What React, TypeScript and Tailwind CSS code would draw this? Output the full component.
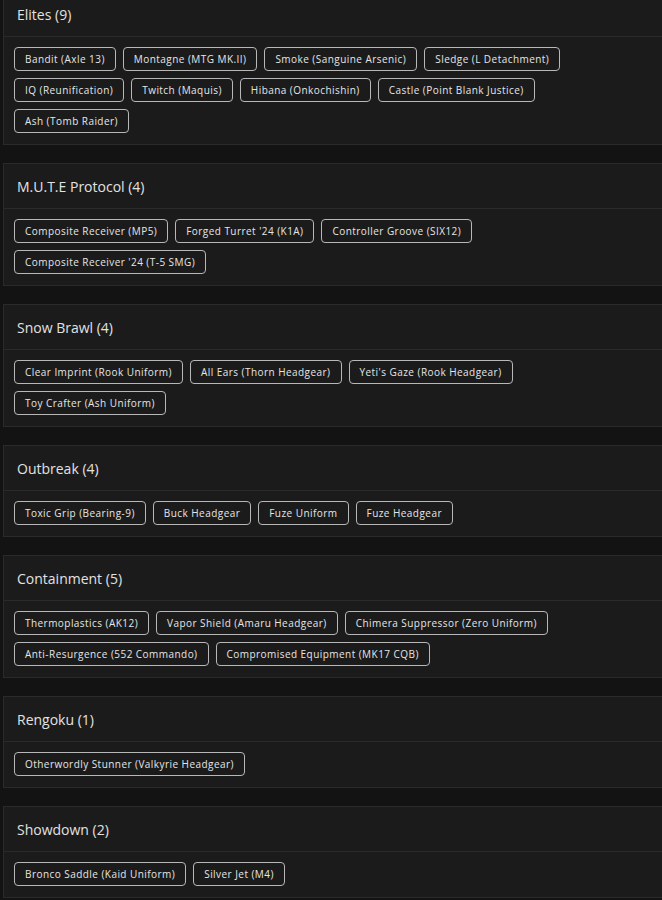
const sections: { title: string; items: string[] }[] = [
  {
    title: 'Elites (9)',
    items: [
      'Bandit (Axle 13)',
      'Montagne (MTG MK.II)',
      'Smoke (Sanguine Arsenic)',
      'Sledge (L Detachment)',
      'IQ (Reunification)',
      'Twitch (Maquis)',
      'Hibana (Onkochishin)',
      'Castle (Point Blank Justice)',
      'Ash (Tomb Raider)',
    ],
  },
  {
    title: 'M.U.T.E Protocol (4)',
    items: [
      'Composite Receiver (MP5)',
      "Forged Turret '24 (K1A)",
      'Controller Groove (SIX12)',
      "Composite Receiver '24 (T-5 SMG)",
    ],
  },
  {
    title: 'Snow Brawl (4)',
    items: [
      'Clear Imprint (Rook Uniform)',
      'All Ears (Thorn Headgear)',
      "Yeti's Gaze (Rook Headgear)",
      'Toy Crafter (Ash Uniform)',
    ],
  },
  {
    title: 'Outbreak (4)',
    items: ['Toxic Grip (Bearing-9)', 'Buck Headgear', 'Fuze Uniform', 'Fuze Headgear'],
  },
  {
    title: 'Containment (5)',
    items: [
      'Thermoplastics (AK12)',
      'Vapor Shield (Amaru Headgear)',
      'Chimera Suppressor (Zero Uniform)',
      'Anti-Resurgence (552 Commando)',
      'Compromised Equipment (MK17 CQB)',
    ],
  },
  {
    title: 'Rengoku (1)',
    items: ['Otherwordly Stunner (Valkyrie Headgear)'],
  },
  {
    title: 'Showdown (2)',
    items: ['Bronco Saddle (Kaid Uniform)', 'Silver Jet (M4)'],
  },
];

function EventCard({ title, items }: { title: string; items: string[] }) {
  return (
    <section className="ml-[3px] w-[664px] border border-[#2a2a2a] bg-[#1b1b1b]">
      <h2 className="flex h-[45px] items-center border-b border-[#2a2a2a] px-[13px] text-[14px] text-[#e2e2e2]">
        {title}
      </h2>
      <div className="flex flex-wrap gap-[7px] px-[10px] pt-[10px] pb-[11px]">
        {items.map((item) => (
          <button
            key={item}
            type="button"
            className="flex h-[24px] items-center rounded-[4px] border border-[#b8b8b8] bg-[#1b1b1b] px-[10px] text-[10px] tracking-[0.45px] text-[#e6e6e6]"
          >
            {item}
          </button>
        ))}
      </div>
    </section>
  );
}

export default function App() {
  return (
    <div
      className="h-[900px] w-[662px] overflow-hidden bg-[#131313]"
      style={{ fontFamily: '"Open Sans", "Liberation Sans", sans-serif' }}
    >
      <div className="-mt-[9px] flex flex-col gap-[18px]">
        {sections.map((s) => (
          <EventCard key={s.title} title={s.title} items={s.items} />
        ))}
      </div>
    </div>
  );
}
